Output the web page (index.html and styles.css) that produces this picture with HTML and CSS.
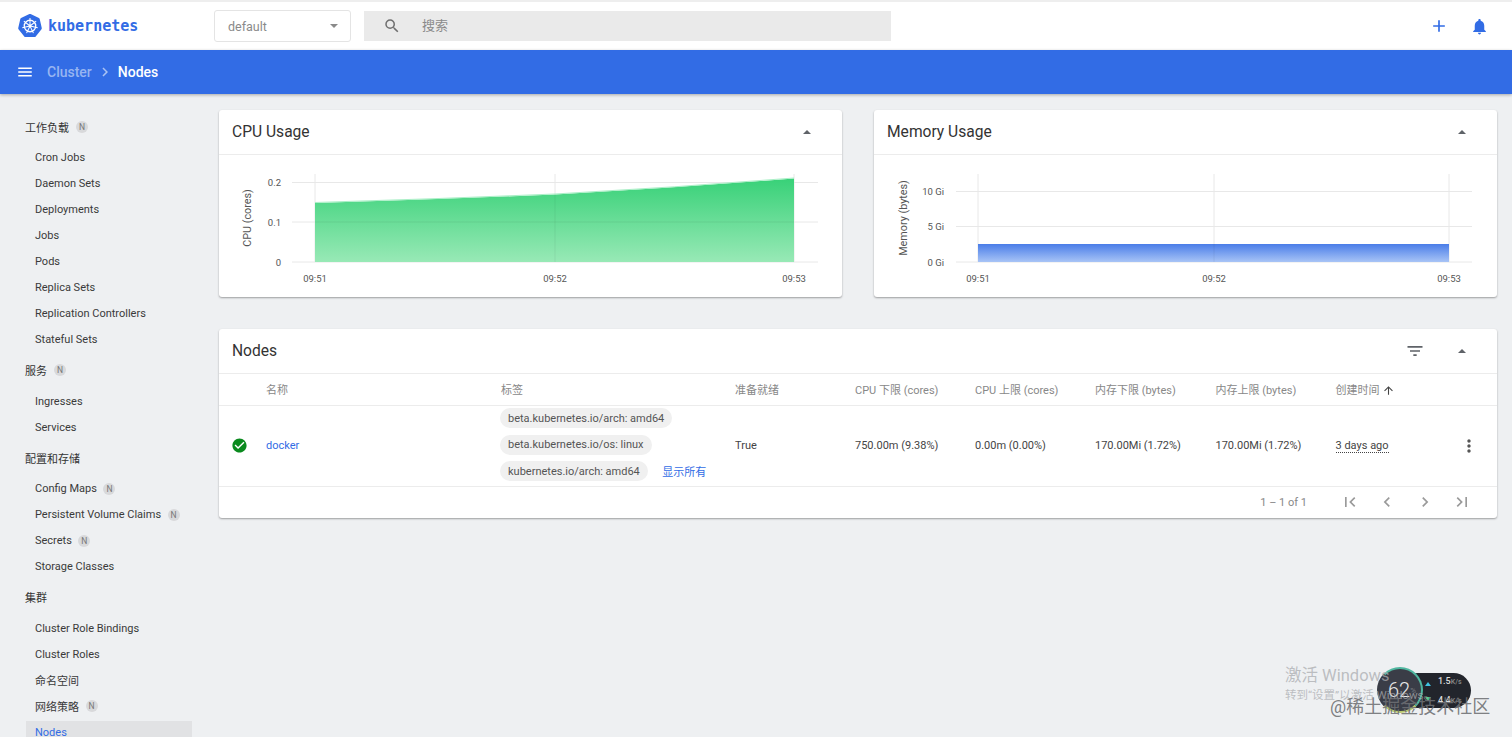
FILE: index.html
```html
<!DOCTYPE html>
<html lang="en">
<head>
    <meta charset="UTF-8">
    <meta name="viewport" content="width=device-width, initial-scale=1.0">
    <title>Nodes - Kubernetes Dashboard</title>
    <link rel="stylesheet" href="styles.css">
</head>
<body>
    <header class="toolbar">
        <div class="brand">
            <svg class="brand-logo" width="26" height="26" viewBox="0 0 28 28">
                <polygon points="14,2.5 22.99,6.83 25.21,16.56 18.99,24.36 9.01,24.36 2.79,16.56 5.01,6.83" fill="#326ce5" stroke="#326ce5" stroke-width="3" stroke-linejoin="round"/>
                <circle cx="14" cy="14" r="6.2" fill="none" stroke="#fff" stroke-width="1.4"/>
                <path d="M14 14V5.5M14 14L20.65 8.7M14 14L22.29 15.89M14 14L17.69 21.66M14 14L10.31 21.66M14 14L5.71 15.89M14 14L7.35 8.7" stroke="#fff" stroke-width="1.1"/>
                <circle cx="14" cy="14" r="1.6" fill="#fff"/>
            </svg>
            <span class="brand-name">kubernetes</span>
        </div>
        <div class="ns-select">
            <span>default</span>
            <i class="caret-down"></i>
        </div>
        <div class="search">
            <svg width="18" height="18" viewBox="0 0 24 24" fill="#6f6f6f"><path d="M15.5 14h-.79l-.28-.27A6.47 6.47 0 0 0 16 9.5 6.5 6.5 0 1 0 9.5 16c1.61 0 3.09-.59 4.23-1.57l.27.28v.79l5 4.99L20.49 19l-4.99-5zm-6 0C7.01 14 5 11.99 5 9.5S7.01 5 9.5 5 14 7.01 14 9.5 11.99 14 9.5 14z"/></svg>
            <span class="search-hint">搜索</span>
        </div>
        <div class="toolbar-actions">
            <svg width="20" height="20" viewBox="0 0 24 24" fill="#326ce5"><path d="M19 13h-6v6h-2v-6H5v-2h6V5h2v6h6v2z"/></svg>
            <svg width="19" height="19" viewBox="0 0 24 24" fill="#326ce5"><path d="M12 22c1.1 0 2-.9 2-2h-4c0 1.1.9 2 2 2zm6-6v-5c0-3.07-1.63-5.64-4.5-6.32V4c0-.83-.67-1.5-1.5-1.5s-1.5.67-1.5 1.5v.68C7.64 5.36 6 7.92 6 11v5l-2 2v1h16v-1l-2-2z"/></svg>
        </div>
    </header>

    <div class="crumbbar">
        <svg width="18" height="18" viewBox="0 0 24 24" fill="#fff"><path d="M3 18h18v-2H3v2zm0-5h18v-2H3v2zm0-7v2h18V6H3z"/></svg>
        <span class="crumb-parent">Cluster</span>
        <svg class="crumb-sep" width="18" height="18" viewBox="0 0 24 24" fill="#a9c2f3"><path d="M10 6L8.59 7.41 13.17 12l-4.58 4.59L10 18l6-6z"/></svg>
        <span class="crumb-current">Nodes</span>
    </div>

    <div class="page">
        <nav class="sidebar">
            <div class="nav-group">工作负载 <b class="ns-badge">N</b></div>
            <a class="nav-item">Cron Jobs</a>
            <a class="nav-item">Daemon Sets</a>
            <a class="nav-item">Deployments</a>
            <a class="nav-item">Jobs</a>
            <a class="nav-item">Pods</a>
            <a class="nav-item">Replica Sets</a>
            <a class="nav-item">Replication Controllers</a>
            <a class="nav-item">Stateful Sets</a>
            <div class="nav-group">服务 <b class="ns-badge">N</b></div>
            <a class="nav-item">Ingresses</a>
            <a class="nav-item">Services</a>
            <div class="nav-group">配置和存储</div>
            <a class="nav-item">Config Maps <b class="ns-badge">N</b></a>
            <a class="nav-item">Persistent Volume Claims <b class="ns-badge">N</b></a>
            <a class="nav-item">Secrets <b class="ns-badge">N</b></a>
            <a class="nav-item">Storage Classes</a>
            <div class="nav-group">集群</div>
            <a class="nav-item">Cluster Role Bindings</a>
            <a class="nav-item">Cluster Roles</a>
            <a class="nav-item">命名空间</a>
            <a class="nav-item">网络策略 <b class="ns-badge">N</b></a>
            <a class="nav-item active">Nodes</a>
        </nav>

        <main class="content">
            <div class="charts">
                <section class="card">
                    <div class="card-head">
                        <h2>CPU Usage</h2>
                        <i class="caret-up"></i>
                    </div>
                    <svg class="chart" width="623" height="142">
                        <defs>
                            <linearGradient id="cpuFill" x1="0" y1="0" x2="0" y2="1">
                                <stop offset="0" stop-color="#38d178"/>
                                <stop offset="1" stop-color="#98e9b6"/>
                            </linearGradient>
                            <linearGradient id="memFill" x1="0" y1="0" x2="0" y2="1">
                                <stop offset="0" stop-color="#4a7de8"/>
                                <stop offset="1" stop-color="#a8c4f6"/>
                            </linearGradient>
                        </defs>
                        <path class="grid-line" d="M73 27.5H599M73 67H599M73 107H599M96 19V107M336 19V107M575 19V107"/>
                        <path d="M96 48Q216 44.5 336 39.5Q456 33 575 23.5V107H96Z" fill="url(#cpuFill)"/>
                        <path class="area-edge" d="M96 47.5Q216 44 336 39Q456 32.500 575 23"/>
                        <path class="grid-over" d="M96 67H575M336 39.5V107"/>
                        <text class="tick" x="62" y="31" text-anchor="end">0.2</text>
                        <text class="tick" x="62" y="70.500" text-anchor="end">0.1</text>
                        <text class="tick" x="62" y="110.500" text-anchor="end">0</text>
                        <text class="tick" x="96" y="127" text-anchor="middle">09:51</text>
                        <text class="tick" x="336" y="127" text-anchor="middle">09:52</text>
                        <text class="tick" x="575" y="127" text-anchor="middle">09:53</text>
                        <text class="axis" transform="translate(32 63) rotate(-90)" text-anchor="middle">CPU (cores)</text>
                    </svg>
                </section>
                <section class="card">
                    <div class="card-head">
                        <h2>Memory Usage</h2>
                        <i class="caret-up"></i>
                    </div>
                    <svg class="chart" width="623" height="142">
                        <path class="grid-line" d="M82 36.500H598M82 71.500H598M82 107H598M104 19V107M340 19V107M575 19V107"/>
                        <rect x="104" y="89" width="471" height="18" fill="url(#memFill)"/>
                        <path class="grid-over" d="M340 89V107"/>
                        <text class="tick" x="70" y="40" text-anchor="end">10 Gi</text>
                        <text class="tick" x="70" y="75" text-anchor="end">5 Gi</text>
                        <text class="tick" x="70" y="110.500" text-anchor="end">0 Gi</text>
                        <text class="tick" x="104" y="127" text-anchor="middle">09:51</text>
                        <text class="tick" x="340" y="127" text-anchor="middle">09:52</text>
                        <text class="tick" x="575" y="127" text-anchor="middle">09:53</text>
                        <text class="axis" transform="translate(33 63) rotate(-90)" text-anchor="middle">Memory (bytes)</text>
                    </svg>
                </section>
            </div>

            <section class="card">
                <div class="card-head">
                    <h2>Nodes</h2>
                    <svg class="filter-icon" width="20" height="20" viewBox="0 0 24 24" fill="#5f6368"><path d="M10 18h4v-2h-4v2zM3 6v2h18V6H3zm3 7h12v-2H6v2z"/></svg>
                    <i class="caret-up"></i>
                </div>
                <table class="nodes">
                    <thead>
                        <tr>
                            <th class="col-status"></th>
                            <th class="col-name">名称</th>
                            <th class="col-labels">标签</th>
                            <th class="col-ready">准备就绪</th>
                            <th class="col-num">CPU 下限 (cores)</th>
                            <th class="col-num">CPU 上限 (cores)</th>
                            <th class="col-mem">内存下限 (bytes)</th>
                            <th class="col-num">内存上限 (bytes)</th>
                            <th class="col-created">创建时间
                                <svg class="sort-icon" width="13" height="13" viewBox="0 0 24 24" fill="#444"><path d="M4 12l1.41 1.41L11 7.83V20h2V7.83l5.58 5.59L20 12l-8-8-8 8z"/></svg>
                            </th>
                            <th></th>
                        </tr>
                    </thead>
                    <tbody>
                        <tr>
                            <td class="status-cell">
                                <svg width="17" height="17" viewBox="0 0 24 24" fill="#0a8a1e"><path d="M12 2C6.48 2 2 6.48 2 12s4.48 10 10 10 10-4.48 10-10S17.52 2 12 2zm-2 15l-5-5 1.41-1.41L10 14.170l7.590-7.590L19 8l-9 9z"/></svg>
                            </td>
                            <td><a class="node-link">docker</a></td>
                            <td>
                                <div class="chips">
                                    <span class="chip">beta.kubernetes.io/arch: amd64</span>
                                    <span class="chip">beta.kubernetes.io/os: linux</span>
                                    <div class="chip-row">
                                        <span class="chip">kubernetes.io/arch: amd64</span>
                                        <a class="show-all">显示所有</a>
                                    </div>
                                </div>
                            </td>
                            <td>True</td>
                            <td>750.00m (9.38%)</td>
                            <td>0.00m (0.00%)</td>
                            <td>170.00Mi (1.72%)</td>
                            <td>170.00Mi (1.72%)</td>
                            <td><span class="age">3 days ago</span></td>
                            <td class="menu-cell">
                                <svg width="20" height="20" viewBox="0 0 24 24" fill="#555"><path d="M12 8c1.100 0 2-.9 2-2s-.9-2-2-2-2 .9-2 2 .9 2 2 2zm0 2c-1.100 0-2 .9-2 2s.9 2 2 2 2-.9 2-2-.9-2-2-2zm0 6c-1.100 0-2 .9-2 2s.9 2 2 2 2-.9 2-2-.9-2-2-2z"/></svg>
                            </td>
                        </tr>
                    </tbody>
                </table>
                <div class="pager">
                    <span class="pager-range">1 – 1 of 1</span>
                    <svg width="20" height="20" viewBox="0 0 24 24" fill="#9a9a9a"><path d="M18.410 16.590L13.820 12l4.590-4.590L17 6l-6 6 6 6zM6 6h2v12H6z"/></svg>
                    <svg width="20" height="20" viewBox="0 0 24 24" fill="#9a9a9a"><path d="M15.410 7.410L14 6l-6 6 6 6 1.410-1.410L10.830 12z"/></svg>
                    <svg width="20" height="20" viewBox="0 0 24 24" fill="#9a9a9a"><path d="M10 6L8.590 7.410 13.170 12l-4.580 4.590L10 18l6-6z"/></svg>
                    <svg width="20" height="20" viewBox="0 0 24 24" fill="#9a9a9a"><path d="M5.590 7.410L10.180 12l-4.590 4.590L7 18l6-6-6-6zM16 6h2v12h-2z"/></svg>
                </div>
            </section>
        </main>
    </div>

    <div class="speed-pill">
        <span class="speed-up">1.5<small>K/s</small></span>
        <span class="speed-down">4.4<small>K/s</small></span>
    </div>
    <div class="speed-dial">62<small>%</small></div>
    <div class="activation">
        <div class="activation-title">激活 Windows</div>
        <div class="activation-sub">转到“设置”以激活 Windows。</div>
    </div>
    <div class="watermark">@稀土掘金技术社区</div>
</body>
</html>
```

FILE: styles.css
```css
* {
    box-sizing: border-box;
}

html, body {
    height: 100%;
}

body {
    margin: 0;
    overflow: hidden;
    position: relative;
    font-family: Roboto, "Noto Sans CJK SC", sans-serif;
    font-size: 12px;
    color: #333;
    background-color: #eef0f2;
    border-top: 2px solid #eeeeee;
}

/* top toolbar */
.toolbar {
    height: 48px;
    display: flex;
    align-items: center;
    background-color: #fff;
}

.brand {
    width: 214px;
    padding-left: 17px;
    display: flex;
    align-items: center;
    gap: 5px;
}

.brand-name {
    font-family: "DejaVu Sans Mono", monospace;
    font-size: 15px;
    font-weight: bold;
    color: #326ce5;
}

.ns-select {
    width: 137px;
    height: 32px;
    padding: 0 13px;
    display: flex;
    align-items: center;
    justify-content: space-between;
    font-size: 12.500px;
    color: #8a8a8a;
    border: 1px solid #e4e4e4;
    border-radius: 3px;
}

.caret-down {
    width: 0;
    height: 0;
    margin-right: -1px;
    border-left: 4.500px solid transparent;
    border-right: 4.500px solid transparent;
    border-top: 4.500px solid #8a8a8a;
}

.search {
    width: 527px;
    height: 30px;
    margin-left: 13px;
    padding-left: 19px;
    display: flex;
    align-items: center;
    gap: 21px;
    font-size: 13px;
    color: #8a8a8a;
    background-color: #eaeaea;
}

.search-hint {
    margin-top: -3px;
}

.toolbar-actions {
    margin-left: auto;
    padding-right: 23px;
    display: flex;
    align-items: center;
    gap: 21.500px;
}

/* blue breadcrumb bar */
.crumbbar {
    height: 44px;
    padding-left: 16px;
    display: flex;
    align-items: center;
    font-size: 14px;
    font-weight: 500;
    color: #fff;
    background-color: #326ce5;
    box-shadow: 0 1px 3px rgba(0, 0, 0, 0.3);
    position: relative;
}

.crumb-parent {
    margin-left: 13px;
    color: #97b5f1;
}

.crumb-sep {
    margin: 0 4px;
}

.page {
    display: flex;
}

/* left navigation */
.sidebar {
    width: 208px;
    flex-shrink: 0;
    padding-top: 15px;
    padding-left: 25px;
    color: #3a3a3a;
}

.nav-group {
    height: 35.5px;
    display: flex;
    align-items: center;
    gap: 7px;
    font-size: 11px;
    color: #333;
}

.nav-item {
    height: 26px;
    width: 167px;
    padding-left: 10px;
    display: flex;
    align-items: center;
    gap: 6.500px;
    font-size: 11px;
}

.nav-item.active {
    width: 166px;
    height: 22px;
    margin: 2px 0 0 1px;
    padding-left: 9px;
    color: #326ce5;
    background-color: #e1e2e4;
}

.ns-badge {
    width: 12px;
    height: 12px;
    display: flex;
    align-items: center;
    justify-content: center;
    font-size: 8.500px;
    font-weight: 400;
    color: #777;
    background-color: #d8d9db;
    border-radius: 50%;
}

/* main column */
.content {
    flex: 1;
    padding: 16px 15px 0 11px;
    display: flex;
    flex-direction: column;
    gap: 32px;
}

.charts {
    display: grid;
    grid-template-columns: 623px 623px;
    gap: 32px;
}

.card {
    background-color: #fff;
    border-radius: 3px;
    box-shadow: 0 1px 2px rgba(0, 0, 0, 0.35);
}

.card-head {
    height: 45px;
    padding: 0 31px 0 13px;
    display: flex;
    align-items: center;
    border-bottom: 1px solid #ececec;
}

.card-head h2 {
    margin: 0;
    margin-right: auto;
    font-size: 15.600px;
    font-weight: 400;
    color: #333;
}

.caret-up {
    width: 0;
    height: 0;
    border-left: 4px solid transparent;
    border-right: 4px solid transparent;
    border-bottom: 4px solid #5f6368;
}

.filter-icon {
    margin-right: 33px;
}

/* charts */
.chart {
    display: block;
}

.grid-line {
    fill: none;
    stroke: #e8e8e8;
    stroke-width: 1;
}

.grid-over {
    fill: none;
    stroke: rgba(0, 0, 0, 0.06);
    stroke-width: 1;
}

.area-edge {
    fill: none;
    stroke: #a9efc6;
    stroke-width: 1;
}

.tick {
    font-size: 9.500px;
    fill: #555;
}

.axis {
    font-size: 10.800px;
    fill: #555;
}

/* nodes table */
.nodes {
    width: 100%;
    table-layout: fixed;
    border-collapse: collapse;
    font-size: 11px;
}

.nodes th {
    height: 31px;
    padding: 0;
    font-weight: 400;
    text-align: left;
    color: #888;
    border-bottom: 1px solid #ececec;
}

.nodes td {
    height: 81px;
    padding: 0;
    color: #444;
    border-bottom: 1px solid #ececec;
}

.col-status {
    width: 47px;
}

.col-name {
    width: 235px;
}

.col-labels {
    width: 234px;
}

.col-ready {
    width: 120px;
}

.col-num {
    width: 120px;
}

.col-mem {
    width: 120.500px;
}

.col-created {
    width: 133px;
}

.status-cell {
    padding-left: 12px !important;
}

.status-cell svg,
.menu-cell svg {
    display: block;
}

.menu-cell svg {
    margin-left: -10px;
}

.node-link {
    color: #326ce5;
}

.chips {
    margin: -1px 0 1px -1px;
    display: flex;
    flex-direction: column;
    align-items: flex-start;
    gap: 6.500px;
}

.chip-row {
    display: flex;
    align-items: center;
    gap: 14.500px;
}

.chip {
    height: 20px;
    padding: 0 8px;
    display: inline-flex;
    align-items: center;
    background-color: #f0f0f0;
    border-radius: 10px;
    color: #555;
}

.show-all {
    font-size: 11px;
    color: #326ce5;
}

.age {
    border-bottom: 1px dotted #444;
}

.sort-icon {
    vertical-align: -3px;
}

.pager {
    height: 31px;
    padding-right: 25px;
    display: flex;
    align-items: center;
    justify-content: flex-end;
    gap: 17.500px;
    font-size: 11px;
    color: #888;
}

.pager-range {
    margin-right: 15px;
}

/* things lying over the page at the bottom right */
.activation {
    position: absolute;
    left: 1285px;
    top: 663px;
    color: rgba(170, 172, 176, 0.75);
}

.activation-title {
    font-size: 16.500px;
    line-height: 22px;
}

.activation-sub {
    font-size: 11.500px;
    line-height: 16px;
}

.speed-pill {
    position: absolute;
    left: 1396px;
    top: 671px;
    width: 75px;
    height: 35px;
    padding: 3px 0 3px 32px;
    display: flex;
    flex-direction: column;
    justify-content: space-between;
    font-size: 9px;
    font-weight: 500;
    color: #ddd;
    background-color: #22252c;
    border-radius: 18px;
}

.speed-pill small {
    font-size: 7px;
    color: #888;
}

.speed-up,
.speed-down {
    padding-left: 10px;
}

.speed-up::before,
.speed-down::before {
    content: "";
    position: absolute;
    left: 29px;
    width: 0;
    height: 0;
    border-left: 3px solid transparent;
    border-right: 3px solid transparent;
}

.speed-up::before {
    top: 9px;
    border-bottom: 4px solid #3fc3e0;
}

.speed-down::before {
    bottom: 7px;
    border-top: 4px solid #4cc38a;
}

.speed-dial {
    position: absolute;
    left: 1377px;
    top: 665px;
    width: 46px;
    height: 46px;
    padding-left: 4px;
    display: flex;
    align-items: center;
    justify-content: center;
    font-size: 20px;
    font-weight: 300;
    color: #e8e8e8;
    background-color: #3a3d47;
    border: 2px solid #4fb7a0;
    border-left-color: #3a3d47;
    border-bottom-color: #b9c96f;
    border-radius: 50%;
}

.speed-dial small {
    font-size: 8px;
    color: #8a8d96;
}

.watermark {
    position: absolute;
    left: 1330px;
    top: 694px;
    font-size: 18px;
    line-height: 22px;
    color: rgba(110, 112, 116, 0.9);
}
```
